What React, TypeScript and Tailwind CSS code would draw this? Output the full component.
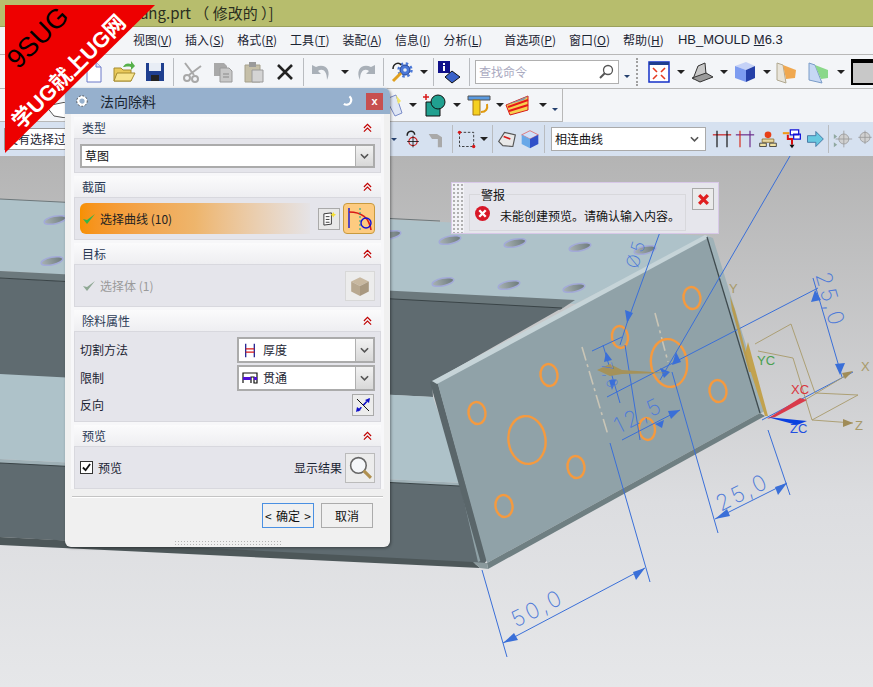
import React from 'react';

const font = { fontFamily: '"Noto Sans CJK SC", "Liberation Sans", sans-serif' };

type IconProps = { className?: string; small?: boolean; children?: React.ReactNode };

// toolbar icon wrapper
const I = ({ className = '', small, children }: IconProps) => (
  <svg viewBox="0 0 24 24" className={`${small ? 'w-5 h-5' : 'w-6 h-6'} shrink-0 ${className}`}>
    {children}
  </svg>
);

const Drop = ({ className = '' }: { className?: string }) => (
  <svg viewBox="0 0 8 8" className={`w-2 h-2 shrink-0 ${className}`}>
    <path d="M0 2h8L4 6z" fill="#222" />
  </svg>
);

const MiniDrop = ({ className = '' }: { className?: string }) => (
  <svg viewBox="0 0 8 8" className={`w-2 h-2 shrink-0 ${className}`}>
    <path d="M1 3h6L4 6z" fill="#24406e" />
  </svg>
);

const Sep = ({ className = '' }: { className?: string }) => (
  <div className={`w-px h-7 shrink-0 bg-[#b9bcc0] ${className}`} />
);

const Chevrons = () => (
  <svg viewBox="0 0 10 10" className="w-[9px] h-[10px]">
    <path d="M1 5l4-4 4 4M1 9l4-4 4 4" fill="none" stroke="#c00000" strokeWidth="1.3" />
  </svg>
);

const SelectArrow = () => (
  <div className="w-[18px] h-full bg-linear-to-b from-[#f2f2f2] to-[#d8d8d8] border-l border-[#b0b0b0] flex items-center justify-center">
    <svg viewBox="0 0 10 6" className="w-[9px] h-[6px]">
      <path d="M1 1l4 4 4-4" fill="none" stroke="#555" strokeWidth="1.8" />
    </svg>
  </div>
);

const menu = [
  { label: '视图', key: 'V', ml: 'ml-0' },
  { label: '插入', key: 'S', ml: 'ml-[13px]' },
  { label: '格式', key: 'R', ml: 'ml-[13px]' },
  { label: '工具', key: 'T', ml: 'ml-[13px]' },
  { label: '装配', key: 'A', ml: 'ml-[13px]' },
  { label: '信息', key: 'I', ml: 'ml-[13px]' },
  { label: '分析', key: 'L', ml: 'ml-[13px]' },
  { label: '首选项', key: 'P', ml: 'ml-[22px]' },
  { label: '窗口', key: 'O', ml: 'ml-[13px]' },
  { label: '帮助', key: 'H', ml: 'ml-[13px]' },
];

const Section = ({
  title,
  bodyClass,
  children,
}: {
  title: string;
  bodyClass: string;
  children: React.ReactNode;
}) => (
  <div className="mx-[3px]">
    <div className="h-[21px] flex items-center justify-between pl-2 pr-[9px] bg-linear-to-b from-[#fbfbfc] to-[#eeeef1] text-xs text-[#2b3a55]">
      <span>{title}</span>
      <Chevrons />
    </div>
    <div className={`border border-[#d8d8de] bg-[#e5e5eb] ${bodyClass}`}>{children}</div>
  </div>
);

const Underlined = ({ label, k }: { label: string; k: string }) => (
  <span>
    {label}(<span className="underline">{k}</span>)
  </span>
);

// the 3D part behind the dialogs
const Scene = () => {
  const holes = [
    [55, 220], [120, 223], [185, 226], [250, 229], [320, 232], [390, 235], [450, 240], [515, 243], [580, 247], [645, 250],
    [52, 261], [443, 282], [509, 285], [574, 288],
  ];
  const rings = [
    [692, 298, 8.5, 11], [620, 337, 8, 11], [669, 363, 18, 24], [549, 375, 8.5, 11], [718, 391, 8.5, 11],
    [477, 413, 8.5, 11], [647, 429, 8, 11], [527, 440, 18.5, 24], [576, 467, 8.5, 11], [504, 506, 8.5, 11],
  ];
  const dims = [
    'M790 156L660 380', 'M660 232L627 323L620 345', 'M818 288L607 397', 'M853 372L762 420',
    'M622 440L680 410', 'M813 278L842 377', 'M715 519L787 483', 'M672 372L718 533', 'M768 430L790 495',
    'M503 643L645 568', 'M482 570L507 657', 'M610 443L650 582', 'M592 351L622 337', 'M603 345L620 403', 'M625 345L640 440',
  ];
  const heads = [
    '627,323 625,310 633,313', '676,352 672,365 681,362', '664,378 660,368 670,372', '815,290 811,302 821,300',
    '840,375 835,364 845,363', '715,519 727,509 730,516', '787,483 775,487 778,495', '503,643 514,633 518,640',
    '645,568 633,572 636,580', '680,410 668,411 671,419', '655,424 664,420 662,428', '606,352 604,362 612,360', '612,390 609,380 616,380',
  ];
  return (
    <svg viewBox="0 156 873 531" className="absolute inset-0 w-full h-full">
      <defs>
        <linearGradient id="hole" x1="0" x2="1">
          <stop offset="0" stopColor="#a8b2b4" />
          <stop offset="1" stopColor="#6d7a7b" />
        </linearGradient>
      </defs>
      <polygon points="0,199 710,236 575,304 0,271" fill="#aec2c9" />
      <polygon points="0,271 575,300 560,310 0,278" fill="#6c797d" />
      <polygon points="0,278 562,308 432,382 433,397 0,375" fill="#5f6b70" />
      <polyline points="0,278 562,308" fill="none" stroke="#3a4447" />
      <polyline points="0,199 440,221" fill="none" stroke="#6d777a" />
      <polygon points="0,374 433,397 463,483 0,459" fill="#aec2c9" />
      <polygon points="0,462 462,486 482,564 0,537" fill="#5f6b70" />
      <polygon points="0,459 463,483 460,486 0,463" fill="#9fb0b6" />
      <polyline points="0,463 460,486" fill="none" stroke="#3a4447" />
      <polygon points="0,537 473,562 480,568 0,545" fill="#4d5759" />
      <polygon points="460,484 466,484 487,558 478,562" fill="#8fa1a6" />
      <polygon points="430,382 437,380 487,560 482,567" fill="#5a666a" />
      <polygon points="437,381 707,237 760,413 487,563" fill="#90a2a8" />
      <polygon points="432,381 705,235 710,237 437,384" fill="#c6d4d8" />
      <polygon points="707,236 713,238 766,410 760,414" fill="#9fb2b8" />
      <polyline points="707,237 760,413" fill="none" stroke="#3e4a4e" strokeWidth="1.3" />
      <polygon points="487,563 760,413 765,416 488,569" fill="#6f7f82" />
      <polygon points="473,562 487,563 488,569 480,568" fill="#8a999c" />
      {holes.map(([x, y]) => (
        <ellipse key={`${x}-${y}`} cx={x} cy={y} rx="11" ry="3.8" transform={`rotate(-12 ${x} ${y})`} fill="url(#hole)" stroke="#a3aad8" strokeWidth="1.5" />
      ))}
      <path d="M582 347L608 435M655 313L668 362" stroke="#c9c5b6" strokeWidth="1.6" strokeDasharray="14 4 3 4" fill="none" />
      {rings.map(([x, y, rx, ry]) => (
        <ellipse key={`${x}-${y}`} cx={x} cy={y} rx={rx} ry={ry} fill="none" stroke="#f59a3f" strokeWidth="2.4" transform={`rotate(-8 ${x} ${y})`} />
      ))}
      <path d={dims.join('')} stroke="#3a6fd8" strokeWidth="1" fill="none" />
      {heads.map((p) => (
        <polygon key={p} points={p} fill="#3a6fd8" />
      ))}
      {/* WCS */}
      <path d="M755 344L791 324L815 393M758 351L793 358L812 420L858 395L815 393M812 420L853 423M805 400L850 373" stroke="#a89a6a" strokeWidth="0.9" fill="none" />
      <polygon points="765,416 768,416 748,342 745,354" fill="#c2a24e" />
      <polygon points="749,372 751,372 735,310 730,296 732,310" fill="#b89b50" />
      <polygon points="767,419 800,398 807,400 775,417" fill="#d93a4a" />
      <polygon points="767,417 807,421 797,425" fill="#0a3fe0" />
      <polygon points="597,370 610,364 622,370 668,373 622,374 610,376" fill="#a5925a" />
      <polygon points="853,423 843,419 843,427" fill="#a08c58" />
      <polygon points="853,371 842,373 845,379" fill="#a08c58" />
      <g style={{ fontFamily: '"Liberation Sans", sans-serif' }} fontSize="13">
        <text x="757" y="365" fill="#4aa050">YC</text>
        <text x="791" y="394" fill="#d9363e">XC</text>
        <text x="790" y="433" fill="#1f4fe0">ZC</text>
        <text x="861" y="371" fill="#a89a6a">X</text>
        <text x="855" y="430" fill="#a89a6a">Z</text>
        <text x="729" y="293" fill="#a89a6a">Y</text>
      </g>
      <g style={{ fontFamily: 'Inter, "Liberation Sans", sans-serif' }} fontSize="22" fill="#4f7bd8" fontWeight="200" letterSpacing="3" textAnchor="middle">
        <text transform="translate(746 499) rotate(-27)">25,0</text>
        <text transform="translate(642 422) rotate(-27)">12,5</text>
        <text transform="translate(541 615) rotate(-27)">50,0</text>
        <text transform="translate(823 302) rotate(74)">25,0</text>
        <text transform="translate(642 255) rotate(-74)" fontSize="18">Ø5</text>
        <text transform="translate(605 378) rotate(74)" fontSize="15">7,0</text>
      </g>
    </svg>
  );
};

export default function App() {
  return (
    <div className="relative w-[873px] h-[687px] overflow-hidden flex flex-col text-xs text-[#1b2433]" style={font}>
      {/* title */}
      <div className="h-[27px] shrink-0 bg-[#b7bd6d] border-b border-[#9aa05c] flex items-center pl-[115px] text-[15px] text-[#2a2e20] whitespace-nowrap">
        D:\fang.prt （ 修改的 ）]
      </div>

      {/* menu */}
      <div className="h-[28px] shrink-0 bg-[#f3f5f8] border-b border-[#b8b8b8] flex items-center pl-[133px] pb-[2px] whitespace-nowrap">
        {menu.map((m) => (
          <span key={m.key} className={m.ml}>
            <Underlined label={m.label} k={m.key} />
          </span>
        ))}
        <span className="ml-[14px] font-['Liberation_Sans'] text-[13px]">
          HB_MOULD <span className="underline">M</span>6.3
        </span>
      </div>

      {/* standard toolbar */}
      <div className="h-[34px] shrink-0 bg-[#f3f5f8] border-b border-[#b8b8b8] flex items-center pl-[81px]">
        <I>
          <path d="M6 2h9l5 5v15H6z" fill="#fff" stroke="#6a78c8" />
          <path d="M15 2v5h5" fill="#dfe4f8" stroke="#6a78c8" />
        </I>
        <I className="ml-[7px]">
          <path d="M2 8h7l2 2h8v11H2z" fill="#e9c95a" stroke="#a58b2e" />
          <path d="M5 13h18l-4 8H2z" fill="#f7e48e" stroke="#a58b2e" />
          <path d="M11 7c2-4 5-4 8-3V1l4 5-4 4V7c-3-1-6 0-8 0z" fill="#55b04a" />
        </I>
        <I className="ml-[7px]">
          <path d="M3 3h18v18H3z" fill="#1f3f8f" />
          <path d="M6 3h12v8H6z" fill="#e8edf5" />
          <path d="M8 15h8v6H8z" fill="#222" />
        </I>
        <Sep className="ml-[6px]" />
        <I className="ml-[6px]">
          <path d="M5 3l9 12M21 6L9 15" stroke="#a8a8a8" strokeWidth="2" fill="none" />
          <circle cx="7" cy="18" r="3" fill="none" stroke="#a8a8a8" strokeWidth="2" />
          <circle cx="15" cy="19" r="3" fill="none" stroke="#a8a8a8" strokeWidth="2" />
        </I>
        <I className="ml-[7px]">
          <path d="M3 3h10l3 3v10H3z" fill="#a9a9a9" />
          <path d="M9 8h9l3 3v11H9z" fill="#c8c8c8" stroke="#9a9a9a" />
          <path d="M12 14h6M12 17h6" stroke="#8a8a8a" />
        </I>
        <I className="ml-[7px]">
          <path d="M3 5h15v17H3z" fill="#c5bfa8" stroke="#a5a08c" />
          <path d="M7 2h7v5H7z" fill="#9a9a9a" />
          <path d="M10 10h11v12H10z" fill="#d4d4d4" stroke="#9a9a9a" />
        </I>
        <I className="ml-[7px]">
          <path d="M5 5l14 14M19 5L5 19" stroke="#222" strokeWidth="2.6" />
        </I>
        <Sep className="ml-[6px]" />
        <I className="ml-[6px]">
          <path d="M2 5v9h9l-3-3c4-3 9-1 9 9 5-10-2-17-11-13z" fill="#a9b0b8" />
        </I>
        <Drop className="ml-[7px]" />
        <I className="ml-[4px]">
          <path d="M22 5v9h-9l3-3c-4-3-9-1-9 9-5-10 2-17 11-13z" fill="#a9b0b8" />
        </I>
        <Sep className="ml-[6px]" />
        <I className="ml-[6px]">
          <circle cx="15" cy="10" r="5" fill="#4a78d8" stroke="#1f3f8f" strokeWidth="1" />
          <circle cx="15" cy="10" r="6.5" fill="none" stroke="#4a78d8" strokeWidth="2.4" strokeDasharray="2.5 2.6" />
          <circle cx="15" cy="10" r="1.8" fill="#e8edf5" />
          <path d="M3 21l8-8" stroke="#e0a020" strokeWidth="3" />
          <path d="M3 9c0-6 6-7 8-4" stroke="#222" strokeWidth="1.5" fill="none" />
        </I>
        <Drop className="ml-[6px]" />
        <Sep className="ml-[5px]" />
        <I className="ml-[3px]">
          <path d="M1 1h12v12H1z" fill="#10108a" />
          <path d="M6 3h2v2H6zM6 6h2v5H6z" fill="#fff" />
          <path d="M15 11l8 6-8 6-7-6z" fill="#3a62c8" stroke="#111" />
        </I>
        <Sep className="ml-[8px]" />
        <div className="ml-[5px] w-[144px] h-6 shrink-0 bg-white border border-[#b0b0b0] flex items-center justify-between pl-[3px] pr-[4px] text-[#a9a9c0]">
          <span>查找命令</span>
          <svg viewBox="0 0 16 16" className="w-4 h-4">
            <circle cx="10" cy="6" r="4.5" fill="#fff" stroke="#555" strokeWidth="1.3" />
            <path d="M7 9l-5 5" stroke="#555" strokeWidth="2" />
          </svg>
        </div>
        <MiniDrop className="ml-[4px] mt-[8px]" />
        <div className="ml-[5px] w-[2px] h-7 shrink-0 border-l-2 border-dotted border-[#a0a0a0]" />
        <I className="ml-[9px]">
          <path d="M2 2h20v20H2z" fill="#fff" stroke="#1530c8" strokeWidth="1.5" />
          <path d="M2 2h20v3H2z" fill="#1f3f8f" />
          <path d="M6 8l4 4M18 8l-4 4M6 19l4-4M18 19l-4-4" stroke="#e63a20" strokeWidth="1.6" />
        </I>
        <Drop className="ml-[6px]" />
        <I className="ml-[5px]">
          <path d="M3 19L8 6l7-3 1 11z" fill="#c8c8c8" stroke="#333" />
          <path d="M2 18l14-5 7 4-13 5z" fill="#9a9a9a" stroke="#333" />
        </I>
        <Drop className="ml-[6px]" />
        <I className="ml-[5px]">
          <path d="M2 6l11-4 9 4-9 4z" fill="#c5d2f7" />
          <path d="M2 6l11 4v12L2 18z" fill="#7d9cf0" />
          <path d="M13 10l9-4v12l-9 4z" fill="#2540a8" />
        </I>
        <Drop className="ml-[6px]" />
        <I className="ml-[3px]">
          <path d="M3 3l6 2 3 18-9-3z" fill="#e8e4da" stroke="#b0a890" />
          <path d="M9 5l13 5-1 8-9 1z" fill="#f0a850" />
        </I>
        <I className="ml-[8px]">
          <path d="M3 3l6 2 7 18-13-3z" fill="#c6d8f4" stroke="#7a9cc8" />
          <path d="M9 5l13 5v8l-7 1z" fill="#8ad88a" />
        </I>
        <Drop className="ml-[7px]" />
        <div className="ml-[6px] w-[30px] h-[26px] shrink-0 bg-[#c8c8c8] border-2 border-t-4 border-black" />
      </div>

      {/* second toolbar, only right part shows past the dialog */}
      <div className="h-[33px] shrink-0 bg-[#f3f5f8]">
        <div className="w-[563px] h-full border-r border-b border-[#b8b8b8] flex items-center pl-[46px]">
          <svg viewBox="0 0 20 16" className="w-5 h-4 shrink-0 mt-[10px]">
            <path d="M0 4L20 0v16L8 14z" fill="#fff" stroke="#555" />
          </svg>
          <I className="ml-[314px]">
            <path d="M6 6l10-4 6 18-7 3z" fill="#dfe6f5" stroke="#7a8cc8" />
            <path d="M16 2l5 6-3 3z" fill="#f2e56a" />
          </I>
          <Drop className="ml-[5px]" />
          <I className="ml-[5px]">
            <path d="M4 9h14v14H4z" fill="#20a090" stroke="#111" />
            <circle cx="16" cy="9" r="7" fill="#20a090" stroke="#111" />
            <path d="M1 4h6M4 1v6" stroke="#d81818" strokeWidth="1.5" />
          </I>
          <Drop className="ml-[7px]" />
          <I className="ml-[6px]">
            <path d="M1 3h22v4H1z" fill="#5a9ae0" stroke="#555" />
            <path d="M6 7h7v15H6z" fill="#f5d020" stroke="#a87810" />
            <path d="M14 19c5 0 7-3 6-8" stroke="#e09a10" strokeWidth="2" fill="none" />
          </I>
          <Drop className="ml-[5px]" />
          <I className="ml-[1px]">
            <path d="M1 12l22-9v14L5 22z" fill="#f5d050" stroke="#d81818" />
            <path d="M3 14l20-7M4 18l19-6" stroke="#e81818" strokeWidth="2" />
            <path d="M1 12l22-9-4 4z" fill="#8a98a8" />
          </I>
          <Drop className="ml-[10px]" />
          <MiniDrop className="ml-[4px] mt-[8px]" />
        </div>
      </div>

      {/* selection bar */}
      <div className="h-[34px] shrink-0 bg-[#d6e1f0] flex items-center pl-[4px]">
        <div className="w-[62px] h-[22px] shrink-0 bg-white border border-[#999] overflow-hidden whitespace-nowrap pl-[1px] leading-[20px]">
          没有选择过滤器
        </div>
        <MiniDrop className="ml-[324px]" />
        <I small className="ml-[5px]">
          <circle cx="12" cy="15" r="5" fill="none" stroke="#c81818" strokeWidth="1.4" />
          <path d="M12 8v14M5 15h14" stroke="#111" />
          <path d="M5 8c0-7 9-7 9-1" fill="none" stroke="#222" strokeWidth="1.8" />
        </I>
        <I small className="ml-[4px]">
          <path d="M2 6h10l6 4v12h-5V12H6z" fill="#a9a9a9" />
        </I>
        <Sep className="ml-[5px]" />
        <I small className="ml-[4px]">
          <path d="M3 4h17v17H3z" fill="none" stroke="#222" strokeDasharray="3 2" />
          <circle cx="3" cy="4" r="2" fill="#d81818" />
          <circle cx="20" cy="21" r="2" fill="#d81818" />
        </I>
        <Drop className="ml-[3px]" />
        <Sep className="ml-[4px]" />
        <I small className="ml-[4px]">
          <path d="M2 15L9 4l13 3-3 14-12-1z" fill="#e8e8e8" stroke="#555" strokeWidth="1.4" />
          <path d="M8 9l8 3" stroke="#d81818" strokeWidth="2" />
        </I>
        <I small className="ml-[3px]">
          <path d="M2 7l10-5 10 5-10 5z" fill="#cfe0fa" stroke="#e06a6a" />
          <path d="M2 7l10 5v11L2 18z" fill="#68a8e8" />
          <path d="M12 12l10-5v11l-10 5z" fill="#3050c8" />
        </I>
        <Sep className="ml-[4px]" />
        <div className="ml-[6px] w-[155px] h-[24px] shrink-0 bg-white border border-[#aaa] flex items-center justify-between pl-[3px] pr-[6px] text-[#111]">
          <span>相连曲线</span>
          <svg viewBox="0 0 10 6" className="w-[9px] h-[6px]">
            <path d="M1 1l4 4 4-4" fill="none" stroke="#555" strokeWidth="1.8" />
          </svg>
        </div>
        <I small className="ml-[6px]">
          <path d="M1 7h22" stroke="#c81818" strokeWidth="1.4" />
          <path d="M6 2v20M18 2v20" stroke="#111" strokeWidth="1.4" />
        </I>
        <I small className="ml-[3px]">
          <path d="M1 7h22" stroke="#6a2a8a" strokeWidth="1.4" />
          <path d="M6 2v20" stroke="#d82818" strokeWidth="1.4" />
          <path d="M18 2v20" stroke="#6a2a8a" strokeWidth="1.4" />
        </I>
        <I small className="ml-[3px]">
          <circle cx="12" cy="7" r="4" fill="#e84018" />
          <path d="M5 12h14v4H5z" fill="#e8d8a0" stroke="#8a7030" />
          <path d="M2 17h8v4H2zM14 17h8v4h-8z" fill="#f0e0a0" stroke="#333" />
        </I>
        <I small className="ml-[4px]">
          <path d="M1 5h8" stroke="#f09a18" strokeWidth="2.5" />
          <path d="M10 1h10v6H10zM14 6h8v6h-8z" fill="#fff" stroke="#1010d8" strokeWidth="1.5" />
          <path d="M7 7v5h5v7" stroke="#d81010" strokeWidth="2.4" fill="none" />
          <path d="M12 23l-3-4h6z" fill="#111" />
        </I>
        <I small className="ml-[3px]">
          <path d="M3 8h10V3l9 9-9 9v-5H3z" fill="#68c8e0" stroke="#3a6a9a" />
        </I>
        <Sep className="ml-[3px]" />
        <I small className="ml-[4px]">
          <circle cx="13" cy="12" r="6" fill="#d0d0d0" stroke="#9a9a9a" />
          <path d="M13 2v20M3 12h20" stroke="#9a9a9a" />
          <path d="M1 6l4 3-4 3zM1 16l4 3-4 3z" fill="#90a8a0" />
        </I>
        <I small className="ml-[2px]">
          <circle cx="12" cy="10" r="6" fill="#d0d0d0" stroke="#9a9a9a" />
          <path d="M12 2v16M4 10h16" stroke="#9a9a9a" />
        </I>
      </div>

      {/* graphics window */}
      <div className="relative flex-1 bg-linear-to-b from-[#b4b4b4] via-[#dcdde0] via-65% to-[#e6e7e9]">
        <Scene />

        {/* alert */}
        <div className="absolute left-[451px] top-[26px] w-[268px] h-[52px] bg-[#e6e6ec] border border-[#d8c8e8] flex">
          <div className="w-[12px] h-full bg-[#f2f2f6] bg-[radial-gradient(#b0b0b0_1px,transparent_1px)] bg-size-[4px_4px]" />
          <div className="relative flex-1">
            <div className="absolute left-[5px] top-[11px] w-[217px] h-[37px] border border-[#d8d8dc]" />
            <span className="absolute left-[16px] top-[4px] px-[1px] leading-4 bg-[#e6e6ec] text-[#111]">警报</span>
            <div className="absolute left-[11px] top-[23px] flex items-center text-[#111]">
              <svg viewBox="0 0 14 14" className="w-[15px] h-[15px] -mt-[3px]">
                <circle cx="7" cy="7" r="7" fill="#d81828" />
                <path d="M4 4l6 6M10 4l-6 6" stroke="#fff" strokeWidth="2.2" />
              </svg>
              <span className="ml-[10px] mt-[2px]">未能创建预览。请确认输入内容。</span>
            </div>
            <div className="absolute left-[228px] top-[5px] w-[22px] h-[22px] bg-[#ebebeb] border border-[#aaa] flex items-center justify-center">
              <svg viewBox="0 0 12 12" className="w-[13px] h-[13px]">
                <path d="M2 2l8 8M10 2l-8 8" stroke="#e02020" strokeWidth="3" />
              </svg>
            </div>
          </div>
        </div>
      </div>

      {/* dialog */}
      <div className="absolute left-[65px] top-[88px] w-[325px] h-[459px] bg-[#f0f0f0] rounded-tr-md rounded-b-md shadow-[1px_1px_3px_rgba(0,0,0,0.4)] flex flex-col">
        <div className="h-[26px] shrink-0 bg-[#96b0cd] rounded-t-md flex items-center pl-[10px] pr-[7px]">
          <svg viewBox="0 0 16 16" className="w-[14px] h-[14px]">
            <circle cx="8" cy="8" r="4.5" fill="none" stroke="#fff" strokeWidth="3" />
            <circle cx="8" cy="8" r="6" fill="none" stroke="#444" strokeWidth="1" strokeDasharray="2 2" />
          </svg>
          <span className="ml-[11px] text-sm text-[#1a2430]">法向除料</span>
          <svg viewBox="0 0 14 14" className="ml-auto w-[13px] h-[13px]">
            <path d="M8 1.5a5 5 0 1 1-6 8" fill="none" stroke="#fff" strokeWidth="2.4" />
          </svg>
          <div className="ml-[11px] w-[17px] h-[17px] bg-[#c75050] flex items-center justify-center text-white text-[11px] font-bold leading-none font-['Liberation_Sans']">
            x
          </div>
        </div>
        <div className="mx-[6px] pt-[3px] flex flex-col gap-[3px] bg-[#f7f7f9]">
          <Section title="类型" bodyClass="h-[35px] flex items-center px-[5px]">
            <div className="w-[295px] h-[24px] bg-white border-2 border-[#ababab] flex items-center justify-between pl-[3px] text-[#111]">
              <span>草图</span>
              <SelectArrow />
            </div>
          </Section>
          <Section title="截面" bodyClass="h-[43px] flex items-center pl-[5px]">
            <div className="w-[230px] h-[31px] rounded-l-md bg-linear-to-r from-[#f79000] via-[#eeb56c] to-[#e5e3e6] flex items-center pl-[2px] text-[#222]">
              <svg viewBox="0 0 14 14" className="w-[14px] h-[14px]">
                <path d="M1 7l4 5 8-10-8 6z" fill="#34b54a" />
              </svg>
              <span className="ml-[4px]">选择曲线 (10)</span>
            </div>
            <div className="ml-[8px] w-[22px] h-[22px] bg-[#e8e8e8] border border-[#aaa] flex items-center justify-center">
              <svg viewBox="0 0 16 16" className="w-[15px] h-[15px]">
                <path d="M2 3l8-1v12l-8 1z" fill="#fff" stroke="#333" />
                <path d="M4 6h4M4 9h4M4 12h4" stroke="#333" />
                <path d="M12 1l1 2 2 1-2 1-1 2-1-2-2-1 2-1z" fill="#f5e030" />
              </svg>
            </div>
            <div className="ml-[3px] w-[32px] h-[31px] bg-[#fdcb80] border border-[#c89a3e] rounded-sm flex items-center justify-center">
              <svg viewBox="0 0 28 26" className="w-[28px] h-[26px]">
                <path d="M4 2v20" stroke="#1010d8" strokeWidth="1.4" />
                <path d="M4 6c10 0 20 4 22 18" stroke="#d81818" strokeWidth="1.6" fill="none" />
                <path d="M15 2v22" stroke="#10a090" strokeDasharray="2 2" />
                <circle cx="21" cy="17" r="5" fill="none" stroke="#1010d8" strokeWidth="1.4" />
              </svg>
            </div>
          </Section>
          <Section title="目标" bodyClass="h-[43px] flex items-center pl-[5px] pr-[5px] text-[#9a9a9a]">
            <svg viewBox="0 0 14 14" className="ml-[2px] w-[14px] h-[14px]">
              <path d="M1 7l4 5 8-10-8 6z" fill="#8fa894" />
            </svg>
            <span className="ml-[4px]">选择体 (1)</span>
            <div className="ml-auto w-[30px] h-[30px] bg-[#ececec] border border-[#d8d8d8] flex items-center justify-center">
              <svg viewBox="0 0 20 20" className="w-[22px] h-[22px]">
                <path d="M10 2l8 4-8 4-8-4z" fill="#c8b8a0" />
                <path d="M2 6l8 4v9l-8-4z" fill="#b8a890" />
                <path d="M18 6l-8 4v9l8-4z" fill="#a89880" />
              </svg>
            </div>
          </Section>
          <Section title="除料属性" bodyClass="h-[91px] px-[5px] pt-[5px] flex flex-col">
            <div className="h-[26px] flex items-center justify-between text-[#1b2433]">
              <span>切割方法</span>
              <div className="w-[138px] h-[26px] bg-white border-2 border-[#ababab] flex items-center justify-between pl-[5px]">
                <span className="flex items-center">
                  <svg viewBox="0 0 14 16" className="w-[12px] h-[15px]">
                    <path d="M2 0v16M12 0v16" stroke="#10108a" strokeWidth="1.4" />
                    <path d="M2 6h10M2 10h10" stroke="#d81818" strokeWidth="1.4" />
                  </svg>
                  <span className="ml-[7px]">厚度</span>
                </span>
                <SelectArrow />
              </div>
            </div>
            <div className="h-[26px] mt-[2px] flex items-center justify-between">
              <span>限制</span>
              <div className="w-[138px] h-[26px] bg-white border-2 border-[#ababab] flex items-center justify-between pl-[3px]">
                <span className="flex items-center">
                  <svg viewBox="0 0 16 12" className="w-[16px] h-[12px]">
                    <path d="M1 11V1h14v10h-3V5H9v6" fill="none" stroke="#111" strokeWidth="1.2" />
                    <path d="M1 5h8v3H1zM12 5h3v3h-3z" fill="#5010d8" />
                  </svg>
                  <span className="ml-[5px]">贯通</span>
                </span>
                <SelectArrow />
              </div>
            </div>
            <div className="h-[22px] mt-[3px] flex items-center justify-between">
              <span>反向</span>
              <div className="w-[22px] h-[22px] bg-[#ececec] border border-[#aaa] flex items-center justify-center mr-[1px]">
                <svg viewBox="0 0 16 16" className="w-[16px] h-[16px]">
                  <path d="M2 2l12 12" stroke="#111" strokeWidth="1" />
                  <path d="M3 14L14 2" stroke="#1010c8" strokeWidth="1.6" strokeDasharray="5 3" />
                  <path d="M15 1l-1 5-4-3zM1 15l1-5 4 3z" fill="#1010c8" />
                </svg>
              </div>
            </div>
          </Section>
          <Section title="预览" bodyClass="h-[43px] flex items-center pl-[5px] pr-[5px]">
            <div className="w-[13px] h-[13px] bg-white border border-[#333] flex items-center justify-center">
              <svg viewBox="0 0 10 10" className="w-[9px] h-[9px]">
                <path d="M1 5l3 3 5-7" fill="none" stroke="#111" strokeWidth="2" />
              </svg>
            </div>
            <span className="ml-[5px]">预览</span>
            <span className="ml-auto">显示结果</span>
            <div className="ml-[3px] w-[30px] h-[30px] bg-[#ececec] border border-[#bbb] flex items-center justify-center">
              <svg viewBox="0 0 24 24" className="w-[25px] h-[25px]">
                <circle cx="10" cy="10" r="7.5" fill="#f5f7fa" stroke="#666" strokeWidth="1.5" />
                <path d="M15 15l7 7" stroke="#b09050" strokeWidth="3" />
              </svg>
            </div>
          </Section>
        </div>
        <div className="mx-[7px] mt-[7px] h-[2px] bg-[#c4c4c4] border-b border-white" />
        <div className="flex justify-end gap-[7px] mt-[5px] pr-[17px]">
          <div className="w-[52px] h-[25px] border border-[#4a90e2] flex items-center justify-between px-[2px] text-[#111]">
            <span>&lt;</span>
            <span>确定</span>
            <span>&gt;</span>
          </div>
          <div className="w-[52px] h-[25px] border border-[#ababab] flex items-center justify-center text-[#111]">
            取消
          </div>
        </div>
        <div className="mt-auto mb-[1px] mx-auto w-[108px] h-[6px] bg-[radial-gradient(#b4b4b4_1px,transparent_1px)] bg-size-[3px_3px]" />
      </div>

      {/* site badge over the corner */}
      <svg viewBox="0 0 160 160" className="absolute left-0 top-0 w-[160px] h-[160px]">
        <polygon points="5,5 155,5 5,153" fill="#ee0000" />
        <g style={{ fontFamily: '"Liberation Sans", "Noto Sans CJK SC", sans-serif' }} textAnchor="middle">
          <text transform="translate(44 44) rotate(-45)" fontSize="27" fill="#000">9SUG</text>
          <text transform="translate(74 77) rotate(-45)" fontSize="21.5" fontWeight="700" fill="#fff">学UG就上UG网</text>
        </g>
      </svg>
    </div>
  );
}
